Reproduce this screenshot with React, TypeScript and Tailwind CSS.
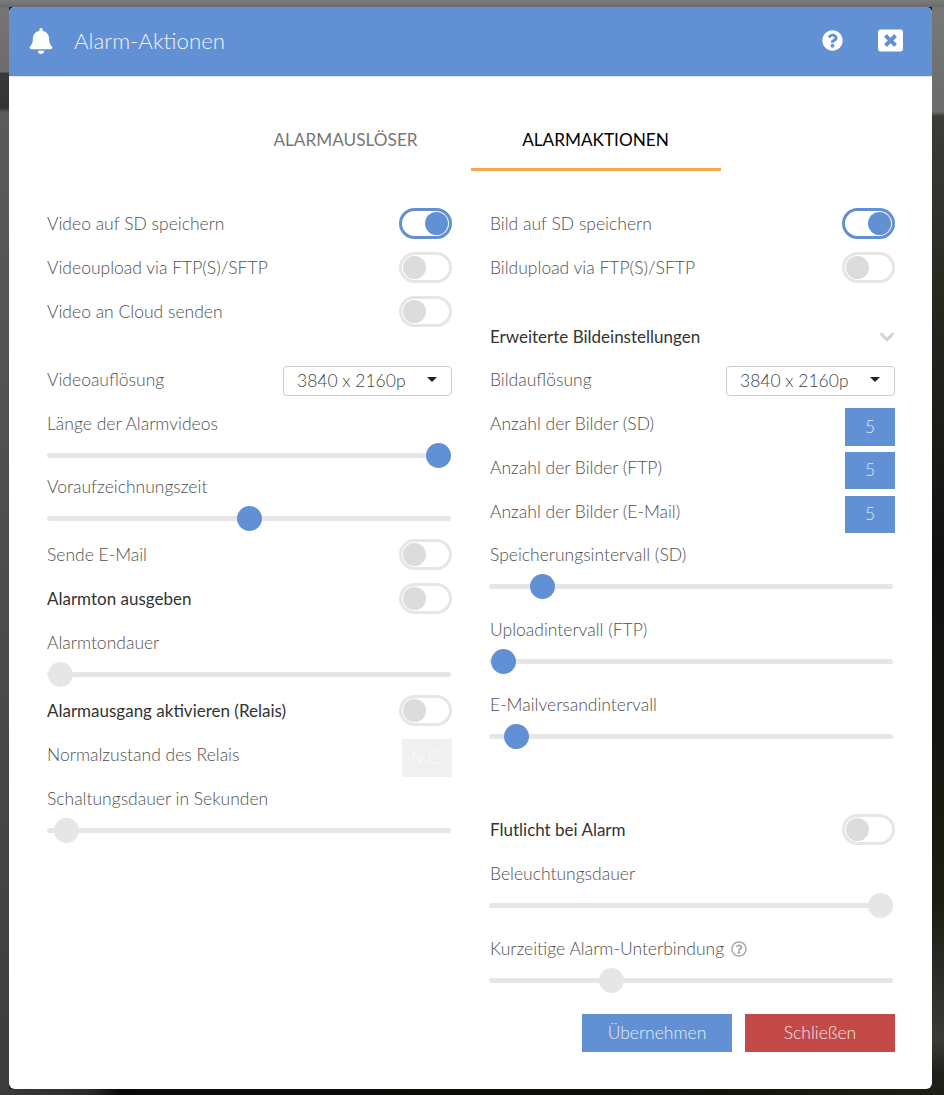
import { FaBell, FaChevronDown, FaQuestionCircle, FaRegQuestionCircle, FaWindowClose } from "react-icons/fa";

function Toggle({ on = false }: { on?: boolean }) {
  return (
    <span
      className={`mb-px flex h-[31px] w-[53px] items-center rounded-full border-[3px] bg-white p-px ${
        on ? "justify-end border-[#6190d4]" : "justify-start border-[#e6e6e6]"
      }`}
    >
      <span className={`size-[23px] rounded-full ${on ? "bg-[#6190d4]" : "bg-[#dcdcdc]"}`} />
    </span>
  );
}

function ToggleRow({ label, on, strong }: { label: string; on?: boolean; strong?: boolean }) {
  return (
    <div className="flex h-[44px] items-center justify-between">
      <span className={strong ? "text-[17px] font-normal text-[#333]" : ""}>{label}</span>
      <Toggle on={on} />
    </div>
  );
}

function Label({ children }: { children: React.ReactNode }) {
  return <div className="flex h-[44px] items-center">{children}</div>;
}

function Slider({ knob, off, shift }: { knob: string; off?: boolean; shift?: boolean }) {
  return (
    <div className={`relative flex h-[19px] items-center ${shift ? "-ml-px" : ""}`}>
      <div className="h-[5px] w-[404px] rounded-full bg-[#e6e6e6]" />
      <span
        className={`absolute top-[-3px] size-[25px] rounded-full ${knob} ${off ? "bg-[#e6e6e6]" : "bg-[#6190d4]"}`}
      />
    </div>
  );
}

function SelectRow({ label }: { label: string }) {
  return (
    <div className="flex h-[44px] items-center justify-between">
      <span>{label}</span>
      <div className="mt-[1px] flex h-[30px] w-[169px] items-center justify-between rounded-[4px] border border-[#ccc] pl-[13px] pr-[14px] text-[#444]">
        <span className="mt-[2px]">3840 x 2160p</span>
        <span className="mb-[2px] size-0 border-x-[5px] border-t-[5px] border-x-transparent border-t-[#222]" />
      </div>
    </div>
  );
}

function CountRow({ label, boxClass = "h-[37px]", rowClass = "h-[44px]" }: { label: string; boxClass?: string; rowClass?: string }) {
  return (
    <div className={`flex items-start justify-between ${rowClass}`}>
      <span className="flex h-[44px] items-center">{label}</span>
      <div className={`mt-[6px] flex w-[50px] items-center justify-center bg-[#6190d4] text-[#dce7f6] ${boxClass}`}>5</div>
    </div>
  );
}

export default function App() {
  return (
    <div className="h-[1095px] overflow-hidden bg-[#222] px-[9px] pt-[7px] font-['Lato',sans-serif] text-[17.5px] font-light text-[#505050] [background:linear-gradient(to_bottom,#7c7c7c,#6a6a6a)_0_0/100%_7px_no-repeat,linear-gradient(to_right,#3a3a3c_0,#2a2a2a_90px,#0a0a0a_120px,#0c0e08_600px,#1c2014_100%)_0_100%/100%_6px_no-repeat,linear-gradient(to_bottom,#767676_0,#6c6c6c_72px,#3a3a3a_73px,#333_108px,#5a5a5a_112px,#3d3d3f_100%)_0_0/9px_100%_no-repeat,linear-gradient(to_bottom,#787878_0,#6c6c6c_112px,#3a3d38_116px,#26281f_300px,#101010_560px,#1c1c12_900px,#3a3a38_1040px,#1f2018_1075px)_100%_0/12px_100%_no-repeat,#222]">
      <div className="h-[1082px] w-[923px] overflow-hidden rounded-[6px] bg-white">
        <header className="flex h-[70px] items-center border-b border-[#e5e5e5] bg-[#6190d4] pb-[2px] text-white">
          <FaBell className="ml-[19px] size-[26px]" />
          <h1 className="ml-[20px] text-[22.3px] font-light text-[#eef3fb]">Alarm-Aktionen</h1>
          <FaQuestionCircle className="ml-auto size-[21px]" />
          <FaWindowClose className="ml-[35px] mr-[29px] size-[25px]" />
        </header>

        <div className="flex justify-center pt-[24px] text-[17.2px] font-normal">
          <div className="flex h-[70px] w-[250px] items-center justify-center pt-[8px] text-[#777]">ALARMAUSLÖSER</div>
          <div className="flex h-[70px] w-[250px] items-center justify-center border-b-[3px] border-[#f5a64a] pt-[11px] text-black">
            ALARMAKTIONEN
          </div>
        </div>

        <div className="flex gap-[38px] pl-[38px] pt-[31px]">
          <div className="w-[405px]">
            <ToggleRow label="Video auf SD speichern" on />
            <ToggleRow label="Videoupload via FTP(S)/SFTP" />
            <ToggleRow label="Video an Cloud senden" />
            <div className="h-[24px]" />
            <SelectRow label="Videoauflösung" />
            <Label>Länge der Alarmvideos</Label>
            <Slider knob="left-[379px]" />
            <Label>Voraufzeichnungszeit</Label>
            <Slider knob="left-[190px]" />
            <div className="h-[5px]" />
            <ToggleRow label="Sende E-Mail" />
            <ToggleRow label="Alarmton ausgeben" strong />
            <Label>Alarmtondauer</Label>
            <Slider knob="left-[1px]" off />
            <div className="h-[5px]" />
            <ToggleRow label="Alarmausgang aktivieren (Relais)" strong />
            <div className="flex h-[44px] items-start justify-between">
              <span className="flex h-[44px] items-center">Normalzustand des Relais</span>
              <div className="mt-[6px] flex h-[38px] w-[50px] items-center justify-center bg-[#f0f0f0] text-[#fafafa]">N.C.</div>
            </div>
            <Label>Schaltungsdauer in Sekunden</Label>
            <Slider knob="left-[7px]" off />
          </div>

          <div className="w-[405px]">
            <ToggleRow label="Bild auf SD speichern" on />
            <ToggleRow label="Bildupload via FTP(S)/SFTP" />
            <div className="h-[25px]" />
            <div className="flex h-[43px] items-center justify-between text-[17px] font-normal text-[#333]">
              <span>Erweiterte Bildeinstellungen</span>
              <FaChevronDown className="size-[16px] stroke-[#d4d4d4] stroke-[30] text-[#d4d4d4]" />
            </div>
            <SelectRow label="Bildauflösung" />
            <CountRow label="Anzahl der Bilder (SD)" boxClass="h-[38px]" />
            <CountRow label="Anzahl der Bilder (FTP)" />
            <CountRow label="Anzahl der Bilder (E-Mail)" rowClass="h-[43px]" />
            <Label>Speicherungsintervall (SD)</Label>
            <Slider knob="left-[41px]" shift />
            <div className="h-[12px]" />
            <Label>Uploadintervall (FTP)</Label>
            <Slider knob="left-[2px]" shift />
            <div className="h-[12px]" />
            <Label>E-Mailversandintervall</Label>
            <Slider knob="left-[15px]" shift />
            <div className="h-[62px]" />
            <ToggleRow label="Flutlicht bei Alarm" strong />
            <Label>Beleuchtungsdauer</Label>
            <Slider knob="left-[379px]" off shift />
            <div className="h-[12px]" />
            <Label>
              Kurzeitige Alarm-Unterbindung
              <FaRegQuestionCircle className="ml-[7px] size-[16px] text-[#aaa]" />
            </Label>
            <Slider knob="left-[110px]" off shift />
            <div className="mt-[24px] flex justify-end gap-[13px] text-[#e4ecf8]">
              <button className="h-[38px] w-[150px] bg-[#6190d4] pt-px">Übernehmen</button>
              <button className="h-[38px] w-[150px] bg-[#c34a48] pt-px text-[#f8e4e4]">Schließen</button>
            </div>
          </div>
        </div>
      </div>
    </div>
  );
}
